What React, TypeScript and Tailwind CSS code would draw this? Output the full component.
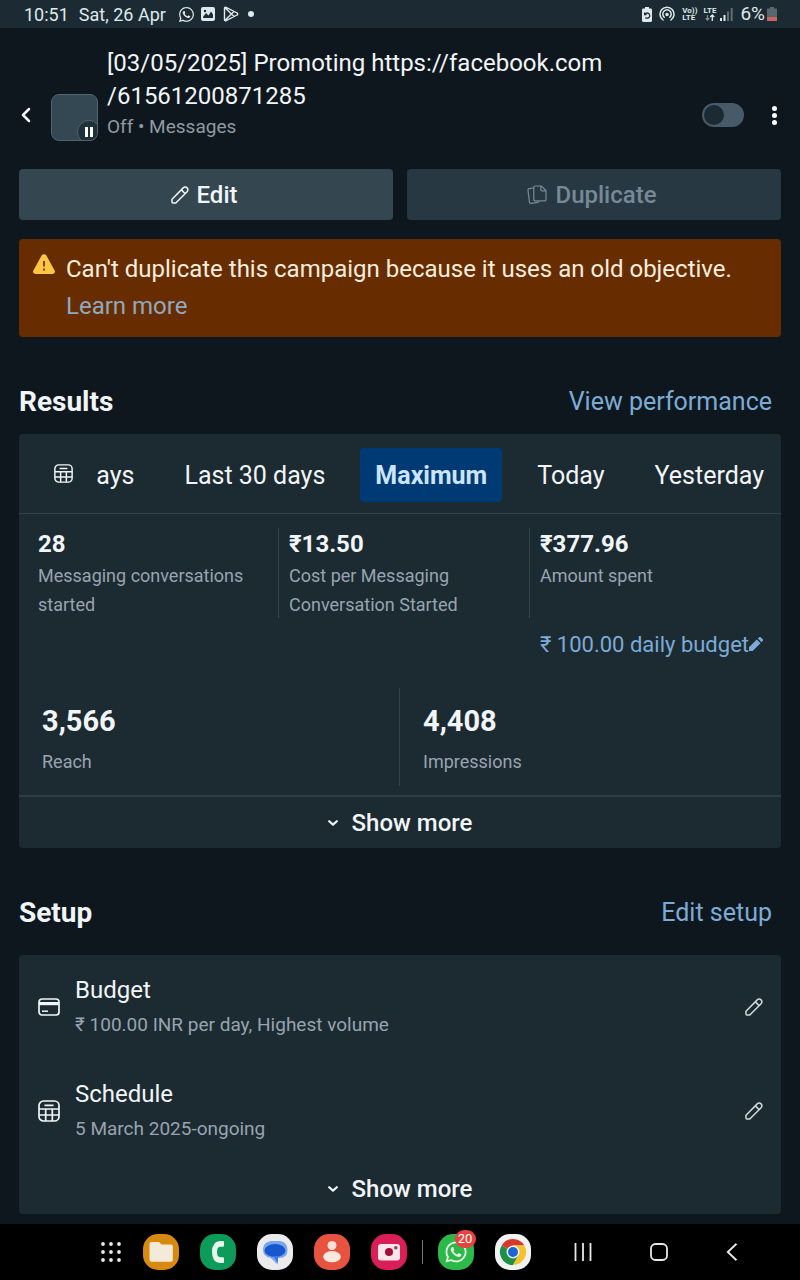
import type { ReactNode } from "react";
import { FaWhatsapp } from "react-icons/fa";

type IconProps = { className?: string };

const PencilIcon = ({ className = "" }: IconProps) => (
  <svg viewBox="0 0 18 18" fill="none" stroke="currentColor" strokeWidth="1.5" strokeLinejoin="round" className={className}>
    <path d="M1 13.2 12.2 1.9a2.7 2.7 0 0 1 3.9 3.9L4.8 17H1.9a.9.9 0 0 1-.9-.9zM10.4 3.9l3.8 3.8" />
  </svg>
);

const DuplicateIcon = () => (
  <svg viewBox="0 0 20 20" fill="none" stroke="currentColor" strokeWidth="1.2" strokeLinejoin="round" className="size-5">
    <path d="M8.2 1h6l4.8 4.5v9a1.4 1.4 0 0 1-1.4 1.4H8.2a1.4 1.4 0 0 1-1.4-1.4V2.4A1.4 1.4 0 0 1 8.2 1z" />
    <path d="M13.8 1v3.8a1 1 0 0 0 1 1H19" />
    <path d="M6.8 2.9 2 3.7a1.2 1.2 0 0 0-1 1.4l1.4 12a1.3 1.3 0 0 0 1.5 1.2l6.8-.9a2 2 0 0 0 1.6-1.5" />
  </svg>
);

const CalendarIcon = ({ className = "" }: IconProps) => (
  <svg viewBox="0 0 22 22" fill="none" stroke="currentColor" strokeWidth="1.7" className={className}>
    <rect x="1" y="1" width="20" height="20" rx="4.5" />
    <path d="M6.5 5.3h9M1 9h20M1 15h20M7.7 9v12M14.3 9v12" />
  </svg>
);

const CardIcon = ({ className = "" }: IconProps) => (
  <svg viewBox="0 0 22 18" fill="none" stroke="currentColor" strokeWidth="1.7" className={className}>
    <rect x="1" y="1" width="20" height="16" rx="3" />
    <path d="M1 5.6h20" strokeWidth="3.2" />
    <path d="M4 13.2h6" strokeWidth="1.5" />
  </svg>
);

const ChevronDown = () => (
  <svg viewBox="0 0 10 6" fill="none" stroke="currentColor" strokeWidth="2.2" strokeLinecap="round" strokeLinejoin="round" className="w-2.5 h-1.5">
    <path d="m1.2 1.200 3.800 3.400 3.800-3.400" />
  </svg>
);

const StatusBar = () => (
  <div className="flex items-center justify-between h-7 pl-6 pr-[23px] bg-[#1c2b33] text-[#dfe8ec] text-[18px]">
    <div className="flex items-center">
      <span className="mr-2.5">10:51</span>
      <span className="mr-3">Sat, 26 Apr</span>
      <FaWhatsapp className="size-[17px] mr-1.5" />
      <svg viewBox="0 0 14 14" className="size-3.5 mr-2">
        <rect width="14" height="14" rx="2" fill="currentColor" />
        <path d="m2 10 3-4 2.5 2.6L10 4.5l2 3V11H2z" fill="#1c2b33" />
        <circle cx="4" cy="4" r="1.2" fill="#1c2b33" />
      </svg>
      <svg viewBox="0 0 16 16" fill="none" stroke="currentColor" strokeWidth="1.4" strokeLinejoin="round" className="size-4 mr-[9px]">
        <path d="M1.5 2.2v11.6a1 1 0 0 0 1.6.8l11-5.6a1.1 1.1 0 0 0 0-2l-11-5.6a1 1 0 0 0-1.6.8zM2 1.8l9 8.8M2 14.2l9-8.8" />
      </svg>
      <span className="size-1.5 rounded-full bg-[#dfe8ec]" />
    </div>
    <div className="flex items-center">
      <svg viewBox="0 0 10 15" className="w-2.5 h-[15px] mr-[7px]">
        <path d="M3 0h4v1.5h1.6A1.4 1.4 0 0 1 10 3v10.5A1.5 1.5 0 0 1 8.5 15h-7A1.5 1.5 0 0 1 0 13.5V3a1.4 1.4 0 0 1 1.4-1.5H3z" fill="currentColor" />
        <path d="M2.6 5.500v2.200h2M2.800 7.500a2.600 2.600 0 1 1 .6 3" fill="none" stroke="#1c2b33" strokeWidth="1.3" />
      </svg>
      <svg viewBox="0 0 16 16" fill="none" stroke="currentColor" strokeWidth="1.5" strokeLinecap="round" className="size-4 mr-[7px]">
        <path d="M4 14a7 7 0 1 1 8 0M5.2 11.2a4.2 4.2 0 1 1 5.6 0" />
        <circle cx="8" cy="8.6" r="1" fill="currentColor" />
      </svg>
      <span className="flex flex-col text-[8px] leading-[7px] font-bold mr-1.5">
        <span>Vo))</span>
        <span>LTE</span>
      </span>
      <span className="flex flex-col items-center text-[8px] leading-[7px] font-bold mr-1">
        <span>LTE</span>
        <svg viewBox="0 0 10 7" fill="none" stroke="currentColor" strokeWidth="1.3" className="w-2.5 h-[7px]">
          <path d="M2.5 1v5M.8 4.3l1.7 1.7 1.7-1.7" opacity=".5" />
          <path d="M7.3 7V1M5.3 3l2-2 2 2" />
        </svg>
      </span>
      <svg viewBox="0 0 13 13" fill="currentColor" className="size-[13px] mr-[7px]">
        <path d="M0 10h2v3H0zM3.5 7h2v6h-2z" />
        <path d="M7 3.5h2V13H7zM10.7 0h2v13h-2z" opacity=".35" />
      </svg>
      <span className="mr-0.5 text-[19px]">6%</span>
      <svg viewBox="0 0 10 14" className="w-2.5 h-3.5">
        <path d="M3 0h4v1.5h3V14H0V1.5h3z" fill="#59676d" />
        <path d="M0 10h10v4H0z" fill="#c8665e" />
      </svg>
    </div>
  </div>
);

const CampaignHeader = () => (
  <header className="flex items-end pt-[19px] pl-[18px] pr-3">
    <button aria-label="Back" className="flex items-center justify-center h-[52px] w-4 mr-[17px]">
      <svg viewBox="0 0 10 16" fill="none" stroke="currentColor" strokeWidth="2.5" strokeLinecap="round" strokeLinejoin="round" className="w-2.5 h-4">
        <path d="M8 2 2 8l6 6" />
      </svg>
    </button>
    <div className="relative size-[47px] shrink-0 mr-[9px] overflow-hidden rounded-lg border border-[#52636d] bg-[#344854]">
      <span className="absolute -right-1 -bottom-1 flex items-center justify-center gap-[2px] size-6 rounded-full border border-[#52636d] bg-[#1f303b]">
        <span className="w-[3px] h-2.5 bg-white" />
        <span className="w-[3px] h-2.5 bg-white" />
      </span>
    </div>
    <div className="flex-1">
      <h1 className="text-[24px] leading-[33px]">
        [03/05/2025] Promoting https://facebook.com
        <br />
        /61561200871285
      </h1>
      <p className="text-[19px] leading-7 text-[#8f9aa3]">Off • Messages</p>
    </div>
    <div className="flex items-center h-[52px]">
      <input
        type="checkbox"
        role="switch"
        aria-label="Campaign active"
        className="appearance-none flex items-center w-[42px] h-6 p-[2px] rounded-full bg-[#465a69] before:size-5 before:rounded-full before:bg-[#1c2b33]"
      />
      <button aria-label="More options" className="flex flex-col items-center justify-center gap-[2px] w-7 h-8 ml-4">
        <span className="size-[5px] rounded-full bg-white" />
        <span className="size-[5px] rounded-full bg-white" />
        <span className="size-[5px] rounded-full bg-white" />
      </button>
    </div>
  </header>
);

const SectionTitle = ({ title, link }: { title: string; link: string }) => (
  <div className="flex items-center justify-between h-9 pr-[9px]">
    <h2 className="text-[28px] font-bold">{title}</h2>
    <a href="#" className="text-[25px] text-[#7cabd6]">
      {link}
    </a>
  </div>
);

const ShowMore = () => (
  <button className="flex items-center justify-center w-full h-[51px] gap-3.5 text-[24px] font-medium">
    <ChevronDown />
    Show more
  </button>
);

const Results = () => (
  <section className="mt-[47px]">
    <SectionTitle title="Results" link="View performance" />
    <div className="mt-3.5 rounded-sm bg-[#1c2a32]">
      <div className="flex items-center h-20 border-b border-[#33434c]">
        <button aria-label="Choose dates" className="pl-[35px] pr-6">
          <CalendarIcon className="size-[19px]" />
        </button>
        <div className="flex flex-1 min-w-0 justify-end gap-5 overflow-hidden pt-[2px] pr-[2px] text-[25px] whitespace-nowrap">
          <button className="shrink-0 px-[15px] pt-[3px]">Last 7 days</button>
          <button className="shrink-0 px-[15px] pt-[3px]">Last 30 days</button>
          <button className="shrink-0 px-[15px] pt-[3px] h-[54px] rounded-sm bg-[#003a75] font-bold text-[#cbe4ff]">Maximum</button>
          <button className="shrink-0 px-[15px] pt-[3px]">Today</button>
          <button className="shrink-0 px-[15px] pt-[3px]">Yesterday</button>
        </div>
      </div>
      <div className="grid grid-cols-3 pt-3.5 pl-[9px]">
        <div className="h-[90px] pl-2.5 border-r border-[#33434c]">
          <p className="text-[24px] leading-[33px] font-bold">28</p>
          <p className="text-[18px] leading-[29px] text-[#98a4b0]">Messaging conversations started</p>
        </div>
        <div className="h-[90px] pl-2.5 border-r border-[#33434c]">
          <p className="text-[24px] leading-[33px] font-bold">₹13.50</p>
          <p className="text-[18px] leading-[29px] text-[#98a4b0]">Cost per Messaging Conversation Started</p>
        </div>
        <div className="h-[90px] pl-2.5">
          <p className="text-[24px] leading-[33px] font-bold">₹377.96</p>
          <p className="text-[18px] leading-[29px] text-[#98a4b0]">Amount spent</p>
        </div>
      </div>
      <button className="flex items-center ml-auto mr-[18px] mt-2.5 h-8 text-[22px] text-[#7cabd6]">
        ₹ 100.00 daily budget
        <svg viewBox="0 0 14 14" fill="currentColor" className="size-3.5">
          <path d="M0 14v-3.7L7.8 2.5l3.7 3.7L3.7 14zM8.8 1.5 10 .4a1.3 1.3 0 0 1 1.9 0l1.7 1.7a1.3 1.3 0 0 1 0 1.9l-1.1 1.2z" />
        </svg>
      </button>
      <div className="grid grid-cols-2 pt-7 pb-[9px] border-b-2 border-[#2d3d46]">
        <div className="h-[98px] pl-[23px] pt-[13px] border-r border-[#33434c]">
          <p className="text-[29px] leading-10 font-bold">3,566</p>
          <p className="text-[18px] leading-[42px] text-[#98a4b0]">Reach</p>
        </div>
        <div className="h-[98px] pl-[23px] pt-[13px]">
          <p className="text-[29px] leading-10 font-bold">4,408</p>
          <p className="text-[18px] leading-[42px] text-[#98a4b0]">Impressions</p>
        </div>
      </div>
      <ShowMore />
    </div>
  </section>
);

const SetupRow = ({ icon, title, detail }: { icon: ReactNode; title: string; detail: string }) => (
  <div className="flex items-center h-[104px] pl-[19px] pr-[18px]">
    <span className="mr-[15px]">{icon}</span>
    <div className="flex-1">
      <p className="text-[24px] leading-9">{title}</p>
      <p className="text-[19px] leading-[34px] text-[#98a4b0]">{detail}</p>
    </div>
    <button aria-label={`Edit ${title}`}>
      <PencilIcon className="size-[18px] text-[#d3dade]" />
    </button>
  </div>
);

const Setup = () => (
  <section className="mt-[47px]">
    <SectionTitle title="Setup" link="Edit setup" />
    <div className="mt-6 rounded-sm bg-[#1c2a32]">
      <SetupRow icon={<CardIcon className="w-[22px] h-[18px]" />} title="Budget" detail="₹ 100.00 INR per day, Highest volume" />
      <SetupRow icon={<CalendarIcon className="size-[22px]" />} title="Schedule" detail="5 March 2025-ongoing" />
      <ShowMore />
    </div>
  </section>
);

const NavBar = () => (
  <nav className="flex items-center justify-center h-14 pl-[38px] bg-black text-[#e8e8e8]">
    <div className="flex items-center gap-[21px]">
      <button aria-label="Apps" className="mr-px">
        <svg viewBox="0 0 20 20" fill="currentColor" className="size-5">
          {[2, 10, 18].map((y) => [2, 10, 18].map((x) => <circle key={`${x}-${y}`} cx={x} cy={y} r="1.9" />))}
        </svg>
      </button>
      <button aria-label="Files">
        <svg viewBox="0 0 36 36" className="size-9">
          <rect width="36" height="36" rx="15" fill="#d8890f" />
          <path d="M6.5 9.5A1.5 1.5 0 0 1 8 8h8l2.5 2.5H28a1.8 1.8 0 0 1 1.8 1.8V26a1.8 1.8 0 0 1-1.8 1.8H8.3A1.8 1.8 0 0 1 6.5 26z" fill="#f3ead9" />
        </svg>
      </button>
      <button aria-label="Phone">
        <svg viewBox="0 0 36 36" className="size-9">
          <rect width="36" height="36" rx="15" fill="#0c9b58" />
          <path d="M19.5 7H23a1 1 0 0 1 1 1v3.800a1 1 0 0 1-1 1h-2.500q-3.500 0-3.500 5.200t3.500 5.200H23a1 1 0 0 1 1 1V28a1 1 0 0 1-1 1h-3.500Q12 28 12 18T19.500 7z" fill="#e5f5ec" />
        </svg>
      </button>
      <button aria-label="Messages">
        <svg viewBox="0 0 36 36" className="size-9">
          <rect width="36" height="36" rx="15" fill="#ebebee" />
          <path d="M14 7h9q7.5 1 7.5 9T22 24h-1l-.5 6.500L14 24q-8-1-8-8.500T14 7z" fill="#79a4ee" />
          <ellipse cx="18" cy="16.5" rx="10.5" ry="6.5" fill="#1756cc" />
          <path d="M16 22h5v7z" fill="#3478e5" />
        </svg>
      </button>
      <button aria-label="Contacts">
        <svg viewBox="0 0 36 36" className="size-9">
          <rect width="36" height="36" rx="15" fill="#e8533f" />
          <circle cx="18" cy="11.5" r="4.5" fill="#fbe0d5" />
          <ellipse cx="18" cy="22.7" rx="8.8" ry="5.6" fill="#fbe9e0" />
        </svg>
      </button>
      <button aria-label="Camera">
        <svg viewBox="0 0 36 36" className="size-9">
          <rect width="36" height="36" rx="15" fill="#d91e58" />
          <rect x="7" y="10" width="22" height="16.5" rx="3" fill="#fae5ea" />
          <circle cx="18" cy="18" r="4" fill="#a50d3a" />
          <circle cx="24.8" cy="13.8" r="1.8" fill="#8c4653" />
        </svg>
      </button>
    </div>
    <span className="w-px h-6 mx-[15px] bg-[#777]" />
    <div className="flex items-center gap-[21px]">
      <button aria-label="WhatsApp" className="relative flex items-center justify-center size-9 rounded-[15px] bg-[#2db84a]">
        <FaWhatsapp className="size-6 text-[#eafbe9]" />
        <span className="absolute -top-1 -right-0.5 flex items-center justify-center w-[21px] h-[18px] rounded-full bg-[#e5433c] text-[13px] text-white">
          20
        </span>
      </button>
      <button aria-label="Chrome">
        <svg viewBox="0 0 36 36" className="size-9">
          <rect width="36" height="36" rx="15" fill="#f2f2f2" />
          <path d="M18 18 6.7 11.5A13 13 0 0 1 29.3 11.5H18z" fill="#d73a2d" />
          <path d="M18 18 6.7 11.5A13 13 0 0 0 18 31l5.600-9.700z" fill="#1f9146" />
          <path d="M18 11.5h11.300A13 13 0 0 1 18 31l5.600-9.700z" fill="#f5c22d" />
          <circle cx="18" cy="18" r="6.5" fill="#f2f2f2" />
          <circle cx="18" cy="18" r="5" fill="#1a66d2" />
        </svg>
      </button>
    </div>
    <div className="flex items-center gap-[58px] ml-[43px]">
      <button aria-label="Recents">
        <svg viewBox="0 0 18 18" stroke="currentColor" strokeWidth="1.8" className="size-[18px]">
          <path d="M1.5 0v18M9 0v18M16.5 0v18" />
        </svg>
      </button>
      <button aria-label="Home">
        <svg viewBox="0 0 18 18" fill="none" stroke="currentColor" strokeWidth="1.8" className="size-[18px]">
          <rect x="1" y="1" width="16" height="16" rx="4.5" />
        </svg>
      </button>
      <button aria-label="Back">
        <svg viewBox="0 0 12 18" fill="none" stroke="currentColor" strokeWidth="1.9" className="w-3 h-[18px]">
          <path d="M10.5.8 1.8 9l8.700 8.200" />
        </svg>
      </button>
    </div>
  </nav>
);

export default function App() {
  return (
    <div className="flex flex-col min-h-screen bg-[#0f171e] font-[Roboto,sans-serif] text-[#f1f5f8]">
      <StatusBar />
      <CampaignHeader />
      <main className="flex-1 px-[19px] pt-7 pb-2.5">
        <div className="grid grid-cols-2 gap-3.5">
          <button className="flex items-center justify-center gap-2 pr-1 h-[51px] rounded-sm bg-[#344751] text-[24px] font-medium">
            <PencilIcon className="size-[18px]" />
            Edit
          </button>
          <button disabled className="flex items-center justify-center gap-2 pr-1 h-[51px] rounded-sm bg-[#283842] text-[24px] font-medium text-[#778896]">
            <DuplicateIcon />
            Duplicate
          </button>
        </div>
        <div role="alert" className="flex mt-[19px] pl-3.5 pr-3 py-3 rounded-sm bg-[#672d00]">
          <svg viewBox="0 0 22 20" className="w-[22px] h-5 mt-[3px] mr-[11px] shrink-0">
            <path d="M8.6 1.5a2.8 2.8 0 0 1 4.8 0l8.200 15A2.300 2.300 0 0 1 19.600 20H2.400a2.300 2.300 0 0 1-2-3.500z" fill="#fcc544" />
            <path d="M11 7v5.500M11 14.500v2" stroke="#672d00" strokeWidth="1.7" />
          </svg>
          <p className="text-[24px] leading-[37px] text-[#fbeedf]">
            Can't duplicate this campaign because it uses an old objective.
            <br />
            <a href="#" className="text-[#8fa9c0]">
              Learn more
            </a>
          </p>
        </div>
        <Results />
        <Setup />
      </main>
      <NavBar />
    </div>
  );
}
